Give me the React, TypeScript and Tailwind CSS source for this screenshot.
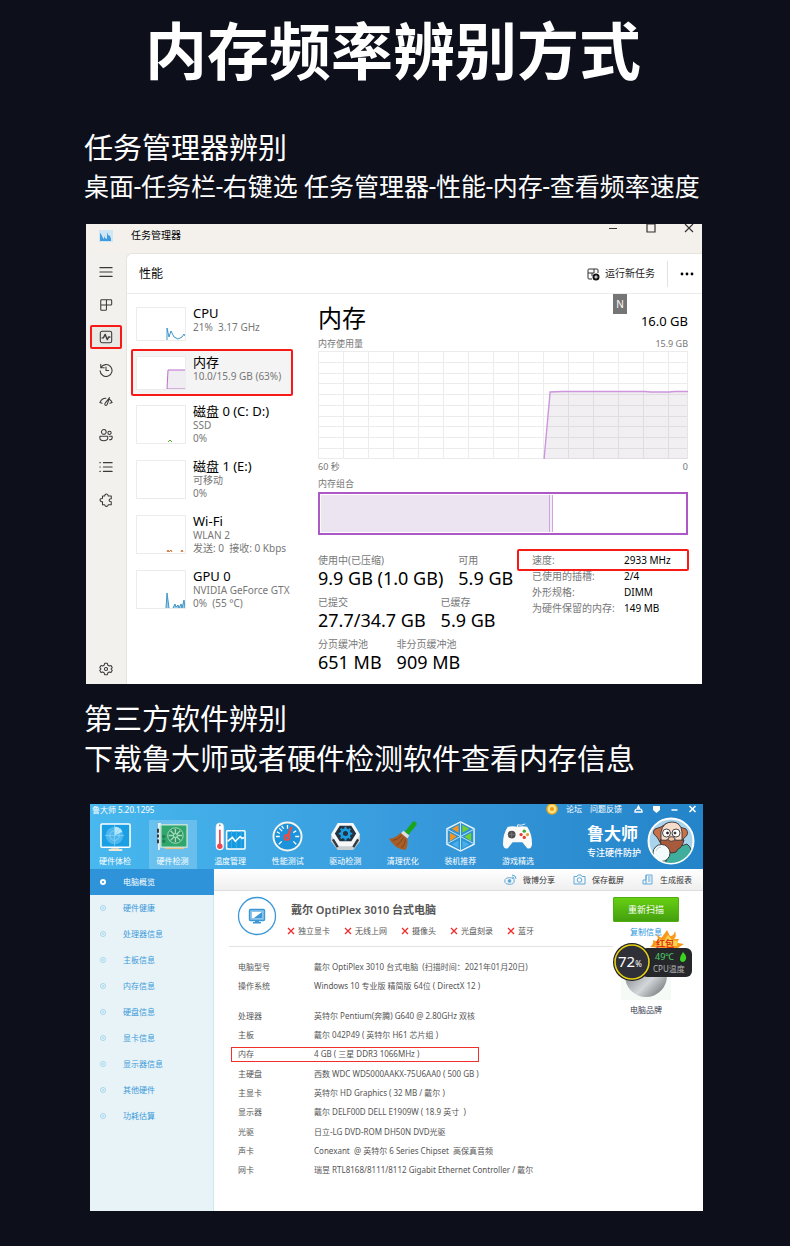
import type { ReactNode } from "react";

const sans = "font-['Noto_Sans','Noto_Sans_CJK_SC',sans-serif]";

// ---------- Task manager ----------

function LineIcon({ children }: { children: ReactNode }) {
    return (
        <svg viewBox="0 0 16 16" className="h-[14px] w-[14px]" fill="none" stroke="#3a3a3a" strokeWidth="1.2" strokeLinecap="round" strokeLinejoin="round">
            {children}
        </svg>
    );
}

const railIcons: { label: string; icon: ReactNode; active?: boolean }[] = [
    { label: "菜单", icon: <path d="M1 3h14M1 8h14M1 13h14" /> },
    { label: "进程", icon: <path d="M3 2h10.5q1 0 1 1v4q0 1-1 1H8.500v5q0 1-1 1H3q-1 0-1-1V3q0-1 1-1zM8.500 2v6H2" /> },
    { label: "性能", active: true, icon: <><rect x="1.5" y="1.5" width="13" height="13" rx="2" /><path d="M3.5 9H5l2-4 2.5 6L11 8h1.5" strokeWidth="1.5" /></> },
    { label: "历史记录", icon: <path d="M2 1.5v4h4M2.2 5.2A6.8 6.8 0 1 1 1.3 9M8 4.500V8.500h3" /> },
    { label: "启动", icon: <path d="M1 8.5Q3.5 3.500 8 3.800M11.5 4.500Q14 6 15 8.500M1 8.500l2.5 1M15 8.500l-2.5 1M12 3L9.500 10.5Q8.500 12.5 7 11.5Q6 10.5 7.300 9z" /> },
    { label: "用户", icon: <><circle cx="5.5" cy="4.5" r="2.7" /><circle cx="12" cy="5.5" r="1.9" /><path d="M1 9.5h9v2q0 3-4.5 3T1 11.5zM12 9.5h3V11q0 2.5-3 2.5" /></> },
    { label: "详细信息", icon: <path d="M1 3h.5M1 8h.5M1 13h.5M5 3h10M5 8h10M5 13h10" /> },
    { label: "服务", icon: <path d="M4 3.5h2.500q0-2.300 2-2.300t2 2.300H14v3q-2.500 0-2.500 1.700T14 10v3.500h-3.500q-.5 1.800-2 1.800t-2-1.800H4V10Q1.200 10 1.200 8T4 6.200z" /> },
];

const railRow = "flex h-6 w-full items-center justify-center";

function Rail() {
    return (
        <nav className="flex w-10 shrink-0 flex-col justify-between bg-[#f2f1ee] pt-[7px] pb-[3px]">
            <div className="flex h-[252px] flex-col justify-between">
                {railIcons.map((r) => (
                    <div key={r.label} className="px-1">
                        <button aria-label={r.label} className={r.active ? railRow + " rounded-[2px] border-2 border-[#f81a16] bg-[#e9e8e5]" : railRow}>
                            <LineIcon>{r.icon}</LineIcon>
                        </button>
                    </div>
                ))}
            </div>
            <button aria-label="设置" className={railRow}>
                <LineIcon>
                    <path d="M6.5 1.5h3l.5 2 1.7 1 2-.6 1.5 2.6L13.700 8l1.5 1.500-1.5 2.600-2-.6-1.700 1-.5 2h-3l-.5-2-1.700-1-2 .6L.8 9.500 2.300 8 .8 6.500l1.5-2.600 2 .6 1.700-1z" />
                    <circle cx="8" cy="8" r="1.8" />
                </LineIcon>
            </button>
        </nav>
    );
}

interface Device {
    name: string;
    lines: string[];
    active?: boolean;
    chart?: ReactNode;
}

const devices: Device[] = [
    { name: "CPU", lines: ["21%  3.17 GHz"], chart: <path d="M30 32V20l2 9 2-6 3 6 4 2 4-2 2-3 1 2" stroke="#3f96c8" fill="none" /> },
    { name: "内存", lines: ["10.0/15.9 GB (63%)"], active: true, chart: <path d="M30 32l1-19h18v19z" stroke="#bd6fd0" fill="#efedf1" /> },
    { name: "磁盘 0 (C: D:)", lines: ["SSD", "0%"], chart: <path d="M31 36l2-2 2 2" stroke="#5ba82e" fill="none" /> },
    { name: "磁盘 1 (E:)", lines: ["可移动", "0%"] },
    { name: "Wi-Fi", lines: ["WLAN 2", "发送: 0  接收: 0 Kbps"], chart: <path d="M30 36l1-2 1 2 2-2 1 2M44 36l1-2 1 2" stroke="#c96b2b" fill="none" /> },
    { name: "GPU 0", lines: ["NVIDIA GeForce GTX", "0%  (55 °C)"], chart: <path d="M29 37l1-15 2 15M36 37l2-4 1 3 2-2 1 3 2-4 1 4 2-8 1 8" stroke="#3f96c8" fill="#9fcbe3" /> },
];

const deviceRow = "flex items-start gap-[7px] text-left";

function DeviceItem({ device }: { device: Device }) {
    const tall = device.lines.length > 1;
    return (
        <button className={device.active ? deviceRow + " mb-[2px] h-[47px] rounded-[2px] border-2 border-[#f81a16] bg-[#f4f4f4] pt-[5px] pl-[3px]" : tall ? deviceRow + " h-[55px] pt-[7px] pl-[5px]" : deviceRow + " h-[49px] pt-[7px] pl-[5px]"}>
            <svg className={tall ? "h-[39px] w-[50px] shrink-0 border border-[#ececec] bg-white" : "h-[34px] w-[50px] shrink-0 border border-[#ececec] bg-white"}>
                {device.chart}
            </svg>
            <span className="-mt-[2px] flex flex-col whitespace-pre text-[10px] leading-[13px] text-[#777]">
                <span className="text-[13px] leading-4 text-black">{device.name}</span>
                {device.lines.map((l) => (
                    <span key={l}>{l}</span>
                ))}
            </span>
        </button>
    );
}

const memoryStats = [
    [["使用中(已压缩)", "9.9 GB (1.0 GB)"], ["可用", "5.9 GB"]],
    [["已提交", "27.7/34.7 GB"], ["已缓存", "5.9 GB"]],
    [["分页缓冲池", "651 MB"], ["非分页缓冲池", "909 MB"]],
];

const memorySpecs = [
    ["速度:", "2933 MHz"],
    ["已使用的插槽:", "2/4"],
    ["外形规格:", "DIMM"],
    ["为硬件保留的内存:", "149 MB"],
];

function MemoryChart() {
    const cols = Array.from({ length: 14 }, (_, i) => (i + 1) * 25);
    const rows = Array.from({ length: 9 }, (_, i) => Math.round((i + 1) * 10.75));
    return (
        <svg viewBox="0 0 369 108" preserveAspectRatio="none" className="h-[108px] w-full">
            <g stroke="#ececec" fill="none" shapeRendering="crispEdges">
                <rect x=".5" y=".5" width="368" height="107" />
                {cols.map((x) => <path key={x} d={`M${x} 0V108`} />)}
                {rows.map((y) => <path key={y} d={`M0 ${y}H369`} />)}
            </g>
            <path d="M226 108L231.5 41H368.5V108z" fill="#6b4f7a" fillOpacity=".09" />
            <path d="M225.5 108L231.5 41 244 40.5H326L332 41H350L356 40.5H369" fill="none" stroke="#cc95dc" strokeWidth="1.4" />
        </svg>
    );
}

function MemoryPane() {
    return (
        <section className="relative flex min-w-0 flex-1 flex-col pr-[14px] pl-[18px]">
            <span className="absolute top-0 right-[75px] flex h-5 w-[14px] items-center justify-center bg-[#757575] text-[10px] text-white">N</span>
            <div className="mt-[6px] flex h-9 items-center justify-between">
                <h3 className="text-[24px] leading-9 text-black">内存</h3>
                <span className="pt-[5px] text-[13px] leading-5 text-black">16.0 GB</span>
            </div>
            <div className="flex h-[15px] items-center justify-between text-[9px] text-[#777]">
                <span>内存使用量</span>
                <span>15.9 GB</span>
            </div>
            <MemoryChart />
            <div className="flex h-4 items-center justify-between text-[9px] text-[#777]">
                <span>60 秒</span>
                <span>0</span>
            </div>
            <div className="flex h-[17px] items-center text-[9px] text-[#777]">内存组合</div>
            <div className="flex h-[43px] border-2 border-[#ac58c6] p-px">
                <div className="w-[63%] border-r border-[#cfa6da] bg-[#ece5f1]" />
                <div className="w-[3px] border-r border-[#cfa6da] bg-[#f3edf6]" />
            </div>
            <div className="mt-[17px] flex justify-between">
                <div className="flex flex-col whitespace-nowrap">
                    {memoryStats.map((row) => (
                        <dl key={row[0][0]} className="flex h-[42px] gap-[15px]">
                            {row.map(([label, value]) => (
                                <div key={label}>
                                    <dt className="text-[10px] leading-4 text-[#777]">{label}</dt>
                                    <dd className="text-[18px] leading-5 text-black">{value}</dd>
                                </div>
                            ))}
                        </dl>
                    ))}
                </div>
                <dl className="-mr-px w-[172px] shrink-0 whitespace-nowrap text-[10px] leading-4">
                    {memorySpecs.map(([label, value], i) => (
                        <div key={label} className="relative flex pl-[15px]">
                            {i === 0 && <span className="absolute inset-x-0 -inset-y-[3px] rounded-[2px] border-2 border-[#f81a16]" />}
                            <dt className="w-[92px] text-[#777]">{label}</dt>
                            <dd className="text-black">{value}</dd>
                        </div>
                    ))}
                </dl>
            </div>
        </section>
    );
}

function TaskManager() {
    return (
        <div className={sans + " flex flex-col overflow-hidden bg-[#f4f1ed]"}>
            <header className="flex h-[29px] justify-between pr-2 pl-[13px]">
                <div className="flex h-[23px] items-center gap-[18px]">
                    <svg viewBox="0 0 14 12" className="h-3 w-[14px]">
                        <rect width="14" height="12" fill="#cfe6f5" />
                        <path d="M1 11V3l1 1 2 4 1 1V6l1 2 2 1V2l1 3 2 1 1 3v2z" fill="#3f9bdc" />
                    </svg>
                    <span className="text-[10px] text-black">任务管理器</span>
                </div>
                <div className="flex h-2 gap-7">
                    <button aria-label="最小化"><svg className="h-[9px] w-[10px]" stroke="#333"><path d="M1 4.5h8" /></svg></button>
                    <button aria-label="最大化"><svg className="h-[9px] w-[10px]" stroke="#333" strokeWidth="1.2" fill="none"><path d="M1 0v8h8V0z" /></svg></button>
                    <button aria-label="关闭"><svg className="h-[9px] w-[10px]" stroke="#333" strokeWidth="1.2"><path d="M1 0l8 8M9 0L1 8" /></svg></button>
                </div>
            </header>
            <div className="flex">
                <Rail />
                <div className="min-w-0 flex-1 rounded-tl-md border-t border-l border-[#e7e4e0] bg-white">
                    <div className="flex h-10 items-center justify-between border-b border-[#ececec] pr-2 pl-3">
                        <h2 className="text-[12px] text-black">性能</h2>
                        <div className="flex items-center">
                            <button className="flex items-center gap-[5px] text-[10px] text-[#222]">
                                <svg viewBox="0 0 14 14" className="h-[14px] w-[14px]" fill="none" stroke="#333">
                                    <path d="M6 12H3q-1 0-1-1V3q0-1 1-1h8q1 0 1 1v3M8 2v4M2 6h6M6 6v3" />
                                    <circle cx="10" cy="10" r="3.5" fill="#111" stroke="none" />
                                    <path d="M10 8.300v3.400M8.300 10h3.400" stroke="#fff" />
                                </svg>
                                运行新任务
                            </button>
                            <span className="mr-3 ml-3 h-[26px] border-l border-[#e2e2e2]" />
                            <button aria-label="更多">
                                <svg viewBox="0 0 14 4" className="h-1 w-[14px]"><circle cx="2" cy="2" r="1.4" /><circle cx="7" cy="2" r="1.4" /><circle cx="12" cy="2" r="1.4" /></svg>
                            </button>
                        </div>
                    </div>
                    <div className="flex pb-[6px]">
                        <div className="flex w-[173px] shrink-0 flex-col items-stretch pt-[6px] pr-[7px] pl-1">
                            {devices.map((d) => <DeviceItem key={d.name} device={d} />)}
                        </div>
                        <MemoryPane />
                    </div>
                </div>
            </div>
        </div>
    );
}

// ---------- Hardware detection tool ----------

const tools: { label: string; icon: ReactNode; active?: boolean }[] = [
    {
        label: "硬件体检",
        icon: (
            <>
                <path d="M12 26h7l1 4h-9z" fill="#cfcabc" />
                <path d="M9 30h14" stroke="#f1e9d5" strokeWidth="2" />
                <rect x="1" y="3" width="30" height="24" rx="1" fill="#1b9fe4" stroke="#fff" strokeWidth="1.6" />
                <circle cx="15" cy="15" r="9" fill="#4db8ee" />
                <circle cx="15" cy="15" r="5" fill="none" stroke="#8dd5f7" strokeWidth=".8" />
                <path d="M15 15V6q6 0 8 5z" fill="#b8e8fb" />
                <path d="M15 15l6-8M15 4v22M5 15h20" stroke="#8dd5f7" strokeWidth=".7" />
            </>
        ),
    },
    {
        label: "硬件检测",
        active: true,
        icon: (
            <>
                <path d="M8 27h20v2H8z" fill="#e8bd80" />
                <rect x="4" y="4" width="27" height="23" fill="#2fa66b" stroke="#dfeee0" strokeWidth="1.2" />
                <path d="M2 2v28M1 3h3" stroke="#f1f4f4" strokeWidth="1.8" />
                <path d="M1 8v4M1 14v3M1 19v4" stroke="#333" strokeWidth="2" />
                <circle cx="19" cy="15" r="8" fill="#2b9460" stroke="#a8dcbc" />
                <path d="M19 15V8M19 15l5-5M19 15h7M19 15l5 5M19 15v7M19 15l-5 5M19 15h-7M19 15l-5-5" stroke="#a8dcbc" strokeWidth="1.4" />
                <circle cx="19" cy="15" r="2" fill="#2fa66b" stroke="#a8dcbc" />
                <circle cx="7" cy="16" r="1.8" fill="#237d55" /><circle cx="7" cy="21" r="1.8" fill="#237d55" />
            </>
        ),
    },
    {
        label: "温度管理",
        icon: (
            <>
                <rect x="1" y="2" width="8" height="28" rx="4" fill="#fff" stroke="#d8e6ef" strokeWidth=".6" />
                <path d="M5 9v15" stroke="#f0444f" strokeWidth="1.8" /><circle cx="5" cy="26" r="2.8" fill="#f0444f" />
                <circle cx="5" cy="4.5" r="1" fill="#888" />
                <rect x="12" y="10" width="19" height="19" rx="1" fill="#1799df" stroke="#fff" strokeWidth="1.6" />
                <path d="M17 10v18M22 10v18M27 10v18" stroke="#49b5ea" strokeWidth=".7" />
                <path d="M13 21l5-4 3 4 5-5 2 2 2-1" fill="none" stroke="#fff" strokeWidth="1.6" />
            </>
        ),
    },
    {
        label: "性能测试",
        icon: (
            <>
                <circle cx="16" cy="16" r="14.5" fill="#1d93dc" stroke="#f6f4ec" strokeWidth="2" />
                <path d="M16 4v4M7.5 7.500l3 3M4 16h4M7 24l3-3M28 16h-4M25 24l-3-3M10 5l2 3M5 11l3 2M25 10l-3 2" stroke="#fff" strokeWidth="1.3" />
                <path d="M16 17l4-11" stroke="#ef4b44" strokeWidth="2.4" /><circle cx="15.5" cy="17" r="2.5" fill="none" stroke="#ef4b44" strokeWidth="2" />
            </>
        ),
    },
    {
        label: "驱动检测",
        icon: (
            <>
                <path d="M8 4h16l7 12v5l-7 9H8l-7-9v-5z" fill="#c9ced1" />
                <path d="M8 2h16l7 12-7 12H8L1 14z" fill="#f6f7f7" />
                <path d="M3 19l5 8M29 19l-5 8" stroke="#333b45" strokeWidth="2.5" />
                <path d="M10 5h12l5 8-5 8H10l-5-8z" fill="#26313f" />
                <circle cx="16" cy="13" r="4" fill="none" stroke="#1b9fe4" strokeWidth="2.8" />
                <path d="M16 6v3M16 17v3M9 13h3M20 13h3M11 8l2 2M21 8l-2 2M11 18l2-2M21 18l-2-2" stroke="#1b9fe4" strokeWidth="2" />
            </>
        ),
    },
    {
        label: "清理优化",
        icon: (
            <>
                <path d="M28 3L20 13" stroke="#1aa51d" strokeWidth="5" strokeLinecap="round" />
                <path d="M17 10l6 5-2 3-7-5z" fill="#dde0df" />
                <path d="M14 12l7 6q1 7-2 12Q8 29 2 18q7 0 12-6z" fill="#a85d28" />
                <path d="M15 15Q11 20 6 20M17 17q-3 6-7 8M19 19q0 5-4 9" stroke="#7d431b" fill="none" />
            </>
        ),
    },
    {
        label: "装机推荐",
        icon: (
            <>
                <path d="M16 1l14 7v16l-14 7-14-7V8z" fill="#2b93d6" stroke="#e8f5fc" strokeWidth="1.5" />
                <path d="M16 16v14M16 16L3 9M16 16l13-7M16 16L3 23M16 16l13 7M16 2v14" stroke="#bfe3f6" />
                <path d="M14 4v8L7 8zM5 12l7 4-7 5z" fill="#f6941f" /><path d="M18 4v8l7-4zM27 12l-7 4 7 5z" fill="#74cf2b" />
                <path d="M14 20v8l-7-4zM18 20v8l7-4z" fill="#4aaee8" />
            </>
        ),
    },
    {
        label: "游戏精选",
        icon: (
            <>
                <path d="M16 8V4q4 1 8-1" stroke="#e9f1f5" fill="none" />
                <path d="M6 6q5-1 10 0 5-1 10 0 5 7 5 18-1 6-5 4l-5-6H11l-5 6q-4 2-5-4Q1 13 6 6z" fill="#fbfaf6" />
                <circle cx="10" cy="14" r="4" fill="#4a4c4e" /><path d="M10 11v6M7 14h6" stroke="#777" />
                <circle cx="23" cy="10.5" r="1.7" fill="#39ac35" /><circle cx="23" cy="17" r="1.7" fill="#e53b33" /><circle cx="19.7" cy="14" r="1.7" fill="#e53b33" /><circle cx="26.3" cy="14" r="1.7" fill="#e5a033" />
            </>
        ),
    },
];

const sections = ["电脑概览", "硬件健康", "处理器信息", "主板信息", "内存信息", "硬盘信息", "显卡信息", "显示器信息", "其他硬件", "功耗估算"];

const missing = ["独立显卡", "无线上网", "摄像头", "光盘刻录", "蓝牙"];

const system = [
    ["电脑型号", "戴尔 OptiPlex 3010 台式电脑  (扫描时间：2021年01月20日)"],
    ["操作系统", "Windows 10 专业版 精简版 64位 ( DirectX 12 )"],
];

const hardware = [
    ["处理器", "英特尔 Pentium(奔腾) G640 @ 2.80GHz 双核"],
    ["主板", "戴尔 042P49 ( 英特尔 H61 芯片组 )"],
    ["内存", "4 GB ( 三星 DDR3 1066MHz )"],
    ["主硬盘", "西数 WDC WD5000AAKX-75U6AA0 ( 500 GB )"],
    ["主显卡", "英特尔 HD Graphics ( 32 MB / 戴尔 )"],
    ["显示器", "戴尔 DELF00D DELL E1909W ( 18.9 英寸  )"],
    ["光驱", "日立-LG DVD-ROM DH50N DVD光驱"],
    ["声卡", "Conexant  @ 英特尔 6 Series Chipset  高保真音频"],
    ["网卡", "瑞昱 RTL8168/8111/8112 Gigabit Ethernet Controller / 戴尔"],
];

function Avatar() {
    return (
        <svg viewBox="0 0 48 48" className="h-12 w-12">
            <defs><clipPath id="face"><circle cx="24" cy="24" r="22" /></clipPath></defs>
            <circle cx="24" cy="24" r="22.5" fill="#a9d4ee" stroke="#fff" strokeWidth="2" />
            <g clipPath="url(#face)" stroke="#333" strokeWidth=".9">
                <path d="M18 48q2-14 13-18l9-3q6 4 8 21z" fill="#3fae9c" />
                <path d="M10 20q-6-4-2-8l6-2q9-8 19 0l6 2q4 5-2 9l-3 6H14z" fill="#c9714b" />
                <path d="M14 15q2-10 11-10t10 10v8q-3 6-10 6t-11-6z" fill="#f5dccb" />
                <path d="M13 23q5 1 11-1 6 2 13 1-2 8-6 9-1 4-6 4t-6-4q-5-2-6-9z" fill="#a85a3c" />
                <circle cx="19.5" cy="16" r="4" fill="#fff" /><circle cx="29" cy="16" r="4" fill="#fff" />
                <circle cx="20.5" cy="16" r="1" fill="#111" /><circle cx="28" cy="16" r="1" fill="#111" />
                <ellipse cx="24.5" cy="22" rx="3.5" ry="2.3" fill="#f0bfa3" />
                <circle cx="14.5" cy="36" r="8.5" fill="#f3fafc" />
                <path d="M9 34q1-4 5-4" fill="none" stroke="#bcd" />
            </g>
        </svg>
    );
}

function ToolHeader() {
    return (
        <header className="flex h-[65px] justify-between bg-linear-to-r from-[#48b8ee] via-[#389bdd] to-[#2484c9] text-[8px] text-white">
            <div className="flex flex-col justify-between">
                <div className="pt-px pl-[2px] leading-[10px]">鲁大师 5.20.1295</div>
                <nav className="flex w-[452px] justify-between pl-px">
                    {tools.map((t) => (
                        <a key={t.label} href="#" className={t.active ? "flex h-[49px] w-12 flex-col items-center gap-[3px] bg-white/20 pt-px" : "flex h-[49px] w-12 flex-col items-center gap-[3px] pt-px"}>
                            <svg viewBox="0 0 32 32" className="h-[31px] w-[31px]">{t.icon}</svg>
                            <span className="leading-[12px]">{t.label}</span>
                        </a>
                    ))}
                </nav>
            </div>
            <div className="flex flex-col pr-[6px]">
                <div className="flex h-[9px] items-center justify-end gap-2">
                    <svg viewBox="0 0 12 12" className="h-3 w-3"><circle cx="6" cy="6" r="5" fill="#fbe38a" stroke="#f2ae1c" strokeWidth="1.5" /><circle cx="6" cy="6" r="2" fill="#ee9b12" /></svg>
                    <a href="#">论坛</a>
                    <a href="#">问题反馈</a>
                    <div className="ml-1 flex items-center gap-[9px]">
                        <button aria-label="皮肤"><svg viewBox="0 0 9 8" className="h-2 w-[9px]" fill="none" stroke="#fff" strokeWidth="1.3"><path d="M2 4L1 6v1h7V6L7 4M3 4l1.500-3L6 4z" /></svg></button>
                        <button aria-label="菜单"><svg viewBox="0 0 9 8" className="h-2 w-[9px]" fill="#fff"><path d="M1 1h7v4L4.500 8 1 5z" /></svg></button>
                        <button aria-label="最小化"><svg viewBox="0 0 9 8" className="h-2 w-[9px]" stroke="#fff" strokeWidth="1.5"><path d="M1.500 5h6" /></svg></button>
                        <button aria-label="关闭"><svg viewBox="0 0 9 8" className="h-2 w-[9px]" stroke="#fff" strokeWidth="1.6"><path d="M1.500 1l6 6M7.500 1l-6 6" /></svg></button>
                    </div>
                </div>
                <div className="flex items-center justify-end gap-[6px] pt-1 pr-[2px]">
                    <div className="whitespace-nowrap">
                        <div className="pt-px text-[17px] leading-[22px] font-bold">鲁大师</div>
                        <div className="text-[9px] leading-[15px] font-medium">专注硬件防护</div>
                    </div>
                    <Avatar />
                </div>
            </div>
        </header>
    );
}

function TemperatureWidget() {
    return (
        <div className="absolute top-[33px] -left-[2px] h-[52px] w-[82px]">
            <svg viewBox="0 0 82 52" className="absolute inset-0 h-full w-full">
                <path d="M39 18q4-3 3-7 4 2 5 0l-1-6q4 5 5 3l5-7 3 6q4 0 5-5 2 5-1 8l5 0q-2 3-1 4l6 1q-6 4-8 5z" fill="#f79a1e" />
                <path d="M44 17q4-4 4-7l5 2 4-6 4 5 6 1-1 5z" fill="#fbd44a" />
                <rect x="30" y="19" width="51" height="29" rx="6" fill="#25272b" />
                <circle cx="21" cy="33" r="19" fill="#1d1f25" />
                <circle cx="21" cy="33" r="17" fill="#303138" stroke="#e8d211" strokeWidth="1.6" />
                <path d="M72 23q4 4 3 7t-3 3q-3 0-3-3t3-7z" fill="#3bd51f" />
            </svg>
            <span className="absolute top-[9px] left-[45px] text-[9px] leading-[12px] font-bold text-[#e0301a]">红包</span>
            <span className="absolute top-[22px] left-[7px] text-[15px] leading-5 text-white">72<span className="text-[8px]">%</span></span>
            <span className="absolute top-[22px] left-[44px] text-[9px] leading-[12px] text-[#4fd163]">49℃</span>
            <span className="absolute top-[34px] left-[42px] text-[8px] leading-[11px] whitespace-nowrap text-[#b5b5b5]">CPU温度</span>
        </div>
    );
}

function Toolbar() {
    return (
        <div className="flex h-[22px] items-center justify-end gap-[18px] border-b border-[#dedede] bg-linear-to-b from-white to-[#efefef] pr-[11px] text-[8px] text-[#333]">
            <button className="flex items-center gap-[6px]">
                <svg viewBox="0 0 13 11" className="h-[11px] w-[13px]" fill="none" stroke="#5fa9d8"><ellipse cx="5.5" cy="7" rx="4.7" ry="3.3" /><circle cx="5.5" cy="7" r="1.4" fill="#5fa9d8" /><path d="M8 3q2 0 2 2M8 1q4 0 4 4" /></svg>
                微博分享
            </button>
            <button className="flex items-center gap-[6px]">
                <svg viewBox="0 0 13 11" className="h-[11px] w-[13px]" fill="none" stroke="#5fa9d8"><path d="M1 2.5h3L5 1h3l1 1.500h3V10H1z" /><circle cx="6.5" cy="6" r="2.3" /></svg>
                保存截屏
            </button>
            <button className="flex items-center gap-[7px]">
                <svg viewBox="0 0 11 11" className="h-[11px] w-[11px]" fill="none" stroke="#5fa9d8"><path d="M4 1h6v9H1V6h3zM4 1v9M6 3h2.500M6 5h2.500M6 7h2.500" /></svg>
                生成报表
            </button>
        </div>
    );
}

function SpecTable({ rows, className }: { rows: string[][]; className: string }) {
    return (
        <table className={className}>
            <tbody>
                {rows.map(([label, value]) => (
                    <tr key={label} className="relative">
                        <th scope="row" className="w-[76px] p-0 text-left font-normal">
                            {label}
                            {label === "内存" && <span className="absolute inset-y-[2px] -left-[7px] w-[248px] border border-[#f0302a]" />}
                        </th>
                        <td className="p-0 whitespace-pre">{value}</td>
                    </tr>
                ))}
            </tbody>
        </table>
    );
}

function Overview() {
    return (
        <div className="flex pt-[5px] pr-6 text-[8px] text-[#555]">
            <div className="min-w-0 flex-1 pl-[15px]">
                <div className="flex h-[51px] items-center gap-[10px] border-b border-[#e3e3e3] pl-2">
                    <svg viewBox="0 0 40 40" className="h-10 w-10 shrink-0 self-start">
                        <circle cx="20" cy="20" r="18.5" fill="#fff" stroke="#3a97d8" strokeWidth="1.3" />
                        <rect x="12.5" y="13.5" width="15" height="11" rx="1" fill="#8ec5e8" stroke="#3a97d8" strokeWidth="1.4" />
                        <path d="M15 16h10v6H15z" fill="#fff" />
                        <path d="M25 16v6h-8z" fill="#3a97d8" />
                        <path d="M18 25h4v1h2v1.500h-8V26h2z" fill="#3a97d8" />
                    </svg>
                    <div className="-mt-1 whitespace-nowrap">
                        <h2 className="pl-1 text-[11px] leading-6 font-semibold">戴尔 OptiPlex 3010 台式电脑</h2>
                        <ul className="flex gap-[14px] leading-[18px]">
                            {missing.map((m) => (
                                <li key={m} className="flex items-center gap-[3px]">
                                    <svg viewBox="0 0 8 8" className="h-2 w-2" stroke="#ee2c2c" strokeWidth="1.3"><path d="M1 1l6 6M7 1L1 7" /></svg>
                                    {m}
                                </li>
                            ))}
                        </ul>
                    </div>
                </div>
                <div className="pt-[10px] pl-[9px]">
                    <SpecTable rows={system} className="h-[39px] w-full" />
                    <SpecTable rows={hardware} className="mt-[10px] h-[174px] w-full" />
                </div>
            </div>
            <div className="relative flex w-[66px] shrink-0 flex-col items-center pt-px">
                <button className="h-[25px] w-full rounded-[1px] border border-[#4fae10] bg-linear-to-b from-[#66cf12] to-[#44a00e] text-[9px] text-white">重新扫描</button>
                <a href="#" className="mt-1 leading-3 text-[#1e95dc]">复制信息</a>
                <svg viewBox="0 0 50 44" className="mt-[18px] h-[44px] w-[50px]">
                    <defs>
                        <linearGradient id="ball" x1="0" y1="0" x2="1" y2="1"><stop offset="0" stopColor="#555a5f" /><stop offset=".6" stopColor="#d4d7d9" /><stop offset="1" stopColor="#5c6166" /></linearGradient>
                    </defs>
                    <rect width="50" height="44" fill="#f5faf6" />
                    <circle cx="25" cy="20" r="21" fill="url(#ball)" />
                </svg>
                <span className="mt-1 leading-3 text-[#333a4d]">电脑品牌</span>
                <TemperatureWidget />
            </div>
        </div>
    );
}

function HardwareTool() {
    return (
        <div className={sans + " overflow-hidden bg-white"}>
            <ToolHeader />
            <div className="flex">
                <nav className="w-[124px] shrink-0 border-r border-[#cfe6f4] bg-[#e8f3f8] text-[8px]">
                    {sections.map((s, i) => (
                        <a key={s} href="#" className={i === 0 ? "-mr-px flex h-[26px] items-center gap-[17px] bg-[#2e93d8] pl-[10px] text-white" : "flex h-[26px] items-center gap-[17px] pl-[10px] text-[#3a9ad9]"}>
                            <svg viewBox="0 0 6 6" className="h-[6px] w-[6px]" fill="none" stroke={i === 0 ? "#fff" : "#8cc8ea"}>
                                {i === 0 ? <circle cx="3" cy="3" r="2" strokeWidth="2" /> : <><circle cx="3" cy="3" r="2.5" strokeWidth=".7" /><circle cx="3" cy="3" r=".6" strokeWidth=".6" /></>}
                            </svg>
                            {s}
                        </a>
                    ))}
                </nav>
                <div className="min-w-0 flex-1 pb-[31px]">
                    <Toolbar />
                    <Overview />
                </div>
            </div>
        </div>
    );
}

export default function App() {
    return (
        <main className="min-h-screen bg-[#0d0f1a] pb-[35px] font-['Roboto','Noto_Sans_CJK_SC',sans-serif] text-white">
            <h1 className="pt-px pr-1 text-center text-[62px] leading-[106px] font-bold">内存频率辨别方式</h1>
            <section className="pt-[22px]">
                <div className="pl-[84px] whitespace-nowrap">
                    <h2 className="text-[29px] leading-10">任务管理器辨别</h2>
                    <p className="text-[25px] leading-[38px]">桌面-任务栏-右键选 任务管理器-性能-内存-查看频率速度</p>
                </div>
                <div className="mt-[17px] pr-[88px] pl-[86px]">
                    <TaskManager />
                </div>
            </section>
            <section className="pt-4">
                <div className="pl-[84px] whitespace-nowrap text-[29px] leading-10">
                    <h2>第三方软件辨别</h2>
                    <p>下载鲁大师或者硬件检测软件查看内存信息</p>
                </div>
                <div className="mt-6 pr-[87px] pl-[90px]">
                    <HardwareTool />
                </div>
            </section>
        </main>
    );
}
